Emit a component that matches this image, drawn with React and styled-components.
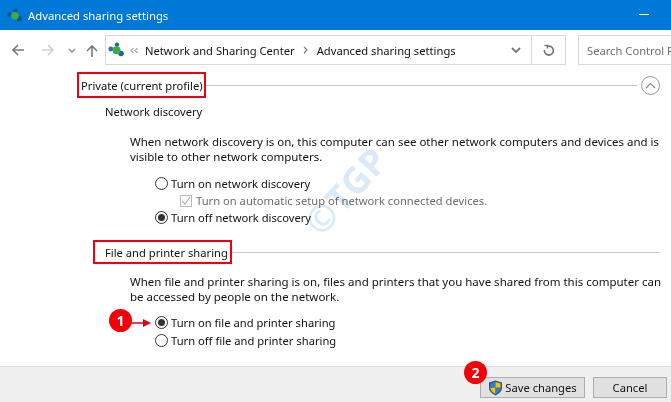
import * as React from 'react';
import styled, { createGlobalStyle } from 'styled-components';

const Global = createGlobalStyle`
  html, body {
    margin: 0;
    padding: 0;
    background: #fff;
    overflow: hidden;
  }
`;

const Window = styled.div`
  position: relative;
  width: 671px;
  height: 402px;
  overflow: hidden;
  display: flex;
  flex-direction: column;
  background: #fff;
  color: #111;
  font-family: 'Noto Sans', 'Open Sans', sans-serif;
  font-size: 11.2px;
`;

const TitleBar = styled.div`
  height: 30px;
  flex: none;
  display: flex;
  align-items: center;
  padding-left: 7px;
  background: #0078d7;
  color: #fff;
  font-size: 11.3px;
`;

const TitleText = styled.span`
  margin-left: 6px;
`;

const Minimize = styled.span`
  width: 10px;
  height: 1px;
  margin-left: auto;
  margin-right: 22px;
  margin-bottom: 2px;
  background: #fff;
`;

const NavBar = styled.div`
  height: 35px;
  flex: none;
  display: flex;
  align-items: center;
  padding-top: 5px;
  box-sizing: border-box;
`;

const NavButtons = styled.div`
  width: 105px;
  flex: none;
  display: flex;
  align-items: center;
  padding-left: 11px;
  box-sizing: border-box;
`;

const AddressBox = styled.div`
  width: 461px;
  height: 30px;
  flex: none;
  display: flex;
  align-items: center;
  box-sizing: border-box;
  border: 1px solid #d9d9d9;
  padding-left: 2px;
`;

const Crumb = styled.span`
  margin-left: ${({ $gap }) => $gap}px;
  white-space: nowrap;
`;

const AddressEnd = styled.div`
  margin-left: auto;
  display: flex;
  align-items: center;
  height: 100%;
`;

const RefreshCell = styled.div`
  width: 33px;
  height: 100%;
  margin-left: 10px;
  display: flex;
  align-items: center;
  justify-content: center;
  border-left: 1px solid #d9d9d9;
`;

const SearchBox = styled.div`
  width: 110px;
  height: 30px;
  flex: none;
  margin-left: 12px;
  padding-left: 8px;
  display: flex;
  align-items: center;
  box-sizing: border-box;
  border: 1px solid #d9d9d9;
  color: #6d6d6d;
  white-space: nowrap;
  overflow: hidden;
`;

const Content = styled.div`
  flex: 1;
  display: flex;
  flex-direction: column;
  padding-top: 7px;
`;

const Heading = styled.div`
  display: flex;
  align-items: center;
  height: ${({ $tall }) => $tall}px;
  margin-top: ${({ $top }) => $top || 0}px;
  margin-left: ${({ $left }) => $left}px;
  margin-right: ${({ $right }) => $right}px;
`;

const RedBox = styled.div`
  flex: none;
  display: flex;
  align-items: center;
  height: 100%;
  box-sizing: border-box;
  padding-left: ${({ $pad }) => $pad}px;
  width: ${({ $width }) => $width}px;
  border: 2px solid #ee0010;
  white-space: nowrap;
`;

const Rule = styled.div`
  flex: 1;
  height: 1px;
  background: #c8c8c8;
`;

const Collapse = styled.div`
  flex: none;
  width: 19px;
  height: 19px;
  margin-left: 4px;
  box-sizing: border-box;
  border: 1px solid #9a9a9a;
  border-radius: 50%;
  display: flex;
  align-items: center;
  justify-content: center;
`;

const SubHeading = styled.div`
  margin: 5px 0 0 105px;
  height: 18px;
  line-height: 18px;
`;

const Para = styled.p`
  margin: ${({ $top }) => $top}px 0 0 130px;
  font-size: 11.5px;
  line-height: 15px;
  white-space: nowrap;
`;

const Options = styled.div`
  margin: ${({ $top }) => $top}px 0 0 155px;
  display: flex;
  flex-direction: column;
  gap: ${({ $gap }) => $gap || 0}px;
`;

const Option = styled.div`
  height: 17px;
  display: flex;
  align-items: center;
  white-space: nowrap;
  padding-left: ${({ $indent }) => $indent || 0}px;
  color: ${({ $muted }) => ($muted ? '#6d6d6d' : 'inherit')};
`;

const Radio = styled.span`
  width: 13px;
  height: 13px;
  margin-right: 3px;
  flex: none;
  box-sizing: border-box;
  border: 1px solid #333;
  border-radius: 50%;
  display: flex;
  align-items: center;
  justify-content: center;
  &::after {
    content: '';
    display: ${({ $on }) => ($on ? 'block' : 'none')};
    width: 7px;
    height: 7px;
    border-radius: 50%;
    background: #333;
  }
`;

const CheckBox = styled.span`
  width: 12px;
  height: 12px;
  margin-right: 4px;
  flex: none;
  box-sizing: border-box;
  border: 1px solid #bcbcbc;
  display: flex;
`;

const Footer = styled.div`
  height: 36px;
  flex: none;
  box-sizing: border-box;
  display: flex;
  justify-content: flex-end;
  align-items: flex-start;
  gap: 8px;
  padding: 10px 4px 0 0;
  background: #f0f0f0;
  border-top: 1px solid #dfdfdf;
`;

const Button = styled.div`
  width: ${({ $width }) => $width}px;
  height: 21px;
  box-sizing: border-box;
  display: flex;
  align-items: center;
  justify-content: center;
  gap: 2px;
  background: #e1e1e1;
  border: 1px solid #adadad;
`;

const Badge = styled.div`
  position: absolute;
  left: ${({ $x }) => $x}px;
  top: ${({ $y }) => $y}px;
  width: 23px;
  height: 23px;
  border-radius: 50%;
  background: #f40009;
  color: #fff;
  font-weight: 700;
  font-size: 14px;
  display: flex;
  align-items: center;
  justify-content: center;
`;

const ArrowMark = styled.svg`
  position: absolute;
  left: 130px;
  top: 317px;
`;

const Watermark = styled.div`
  position: absolute;
  left: 295px;
  top: 173px;
  transform: rotate(-48deg);
  color: #dce9f7;
  font-weight: 700;
  font-size: 36px;
  letter-spacing: 1px;
  line-height: 1;
  mix-blend-mode: multiply;
  pointer-events: none;
`;

const NetworkIcon = ({ size = 16, dark }) => (
  <svg width={size} height={size} viewBox="0 0 16 16">
    <circle cx="2.800" cy="7" r="2.400" fill={dark ? '#17548f' : '#2f6fb5'} />
    <circle cx="9" cy="2.600" r="2.200" fill={dark ? '#17548f' : '#2a5f9e'} />
    <circle cx="13" cy="11.500" r="2.800" fill={dark ? '#14508c' : '#1f5fae'} />
    <circle cx="8.500" cy="8.200" r="4" fill="#3cae3c" />
  </svg>
);

const Shield = () => (
  <svg width="15" height="16" viewBox="0 0 15 16">
    <path d="M7.500.5 14 2.600v5c0 3.800-3 6.400-6.500 7.900C4 14 1 11.400 1 7.600v-5z" fill="#27598f" />
    <path d="M7.500 2 2.400 3.600V7.700h5.100z" fill="#2f7fd0" />
    <path d="M7.500 2l5.100 1.600V7.700H7.500z" fill="#f5c400" />
    <path d="M2.400 7.700h5.100v6.200C5 12.700 2.600 10.700 2.400 7.700z" fill="#f5c400" />
    <path d="M12.600 7.700H7.500v6.200c2.500-1.200 4.900-3.200 5.100-6.200z" fill="#2f7fd0" />
  </svg>
);

const Stroke = ({ w, h, children, color = '#7a7a7a', sw = 1.6, style }) => (
  <svg width={w} height={h} viewBox={`0 0 ${w} ${h}`} fill="none" stroke={color} strokeWidth={sw} style={style}>
    {children}
  </svg>
);

const App = () => (
  <Window>
    <Global />
    <TitleBar>
      <NetworkIcon size={15} dark />
      <TitleText>Advanced sharing settings</TitleText>
      <Minimize />
    </TitleBar>

    <NavBar>
      <NavButtons>
        <Stroke w={14} h={12}>
          <path d="M13 6H2M7 1 2 6l5 5" />
        </Stroke>
        <Stroke w={14} h={12} color="#cfcfcf" style={{ marginLeft: 16 }}>
          <path d="M1 6h11M7 1l5 5-5 5" />
        </Stroke>
        <Stroke w={8} h={5} sw={1.3} color="#8a8a8a" style={{ marginLeft: 13 }}>
          <path d="M1 1l3 3 3-3" />
        </Stroke>
        <Stroke w={12} h={13} style={{ marginLeft: 10 }}>
          <path d="M6 13V2M1 7l5-5 5 5" />
        </Stroke>
      </NavButtons>
      <AddressBox>
        <NetworkIcon />
        <Stroke w={8} h={7} sw={1} color="#777" style={{ marginLeft: 6 }}>
          <path d="M3.500 1 1 3.500 3.500 6M7.500 1 5 3.500 7.500 6" />
        </Stroke>
        <Crumb $gap={7}>Network and Sharing Center</Crumb>
        <Stroke w={5} h={8} sw={1.1} color="#777" style={{ marginLeft: 8 }}>
          <path d="M1 1l3 3-3 3" />
        </Stroke>
        <Crumb $gap={9}>Advanced sharing settings</Crumb>
        <AddressEnd>
          <Stroke w={10} h={7} sw={1.8} color="#777">
            <path d="M1 1l4 4 4-4" />
          </Stroke>
          <RefreshCell>
            <Stroke w={12} h={13} sw={1.6} color="#777">
              <path d="M4 2.500a4.500 4.500 0 1 1-2.600 3.500M1.500 1.500h3v3" />
            </Stroke>
          </RefreshCell>
        </AddressEnd>
      </AddressBox>
      <SearchBox>Search Control Panel</SearchBox>
    </NavBar>

    <Content>
      <Heading $tall={26} $left={77} $right={11}>
        <RedBox $pad={2} $width={129}>Private (current profile)</RedBox>
        <Rule />
        <Collapse>
          <Stroke w={11} h={7} sw={1.2} color="#8a8a8a">
            <path d="M1 6l4.500-4.500L10 6" />
          </Stroke>
        </Collapse>
      </Heading>
      <SubHeading>Network discovery</SubHeading>
      <Para $top={13}>
        When network discovery is on, this computer can see other network computers and devices and is
        <br />
        visible to other network computers.
      </Para>
      <Options $top={11}>
        <Option>
          <Radio />
          Turn on network discovery
        </Option>
        <Option $indent={25} $muted>
          <CheckBox>
            <Stroke w={10} h={10} sw={1.2} color="#b5b5b5">
              <path d="M1 5l3 3 5-7" />
            </Stroke>
          </CheckBox>
          Turn on automatic setup of network connected devices.
        </Option>
        <Option>
          <Radio $on />
          Turn off network discovery
        </Option>
      </Options>

      <Heading $tall={24} $top={14} $left={93} $right={11}>
        <RedBox $pad={10} $width={139}>File and printer sharing</RedBox>
        <Rule />
      </Heading>
      <Para $top={10}>
        When file and printer sharing is on, files and printers that you have shared from this computer can
        <br />
        be accessed by people on the network.
      </Para>
      <Options $top={10} $gap={1}>
        <Option>
          <Radio $on />
          Turn on file and printer sharing
        </Option>
        <Option>
          <Radio />
          Turn off file and printer sharing
        </Option>
      </Options>
    </Content>

    <Footer>
      <Button $width={105}>
        <Shield />
        Save changes
      </Button>
      <Button $width={74}>Cancel</Button>
    </Footer>

    <Watermark>©TGP</Watermark>
    <Badge $x={109} $y={309}>1</Badge>
    <ArrowMark width="22" height="12" viewBox="0 0 22 12">
      <path d="M0 6h14" stroke="#e8000d" strokeWidth="1.5" />
      <path d="M13 2l8 4-8 4z" fill="#e8000d" />
    </ArrowMark>
    <Badge $x={464} $y={361}>2</Badge>
  </Window>
);

export default App;
